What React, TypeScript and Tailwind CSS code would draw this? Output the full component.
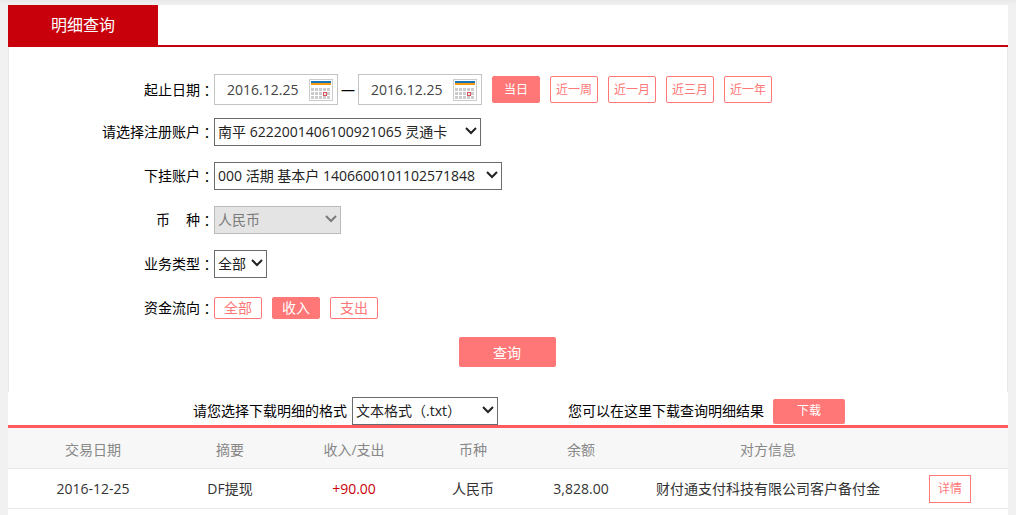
import React, { useState } from "react";

function Chevron({ muted = false }: { muted?: boolean }) {
  return (
    <svg
      aria-hidden="true"
      width="12"
      height="8"
      viewBox="0 0 12 8"
      className={`pointer-events-none absolute top-[9px] right-1 ${muted ? "text-[#7b7b7b]" : "text-[#222222]"}`}
    >
      <path d="M1 1l5 5 5-5" fill="none" stroke="currentColor" strokeWidth="2" />
    </svg>
  );
}

type PickerProps = {
  id: string;
  options: string[];
  width: string;
  disabled?: boolean;
  face?: string;
};

function Picker({ id, options, width, disabled = false, face = "" }: PickerProps) {
  return (
    <div className={`relative ${width}`}>
      <select
        id={id}
        disabled={disabled}
        className={`block h-7 w-full appearance-none border pl-[3px] text-sm ${face} ${
          disabled
            ? "border-[#bbbbbb] bg-[#e4e4e4] text-[#7b7b7b] opacity-100"
            : "border-[#6b6b6b] bg-white text-[#222222]"
        }`}
      >
        {options.map((option) => (
          <option key={option}>{option}</option>
        ))}
      </select>
      <Chevron muted={disabled} />
    </div>
  );
}

const dotRows = [9, 13, 17];
const dotColumns = [2, 6, 10, 14, 18];

function CalendarIcon() {
  return (
    <svg aria-hidden="true" width="24" height="22" viewBox="0 0 24 22" shapeRendering="crispEdges">
      <rect x="0.5" y="0.5" width="23" height="21" fill="#ffffff" stroke="#cccccc" />
      <rect x="2" y="2" width="20" height="2" fill="#1673b8" />
      <rect x="2" y="4" width="20" height="2" fill="#f29a11" />
      {dotRows.map((y) =>
        dotColumns.map((x) => <rect key={`${x}-${y}`} x={x} y={y} width="3" height="3" fill="#cccccc" />)
      )}
      <rect x="14.5" y="13.5" width="3" height="3" fill="#eeeeee" stroke="#d9535f" />
    </svg>
  );
}

function DateField({ id, label }: { id: string; label: string }) {
  return (
    <div className="flex h-[31px] w-[124px] items-center border border-[#c4c4c4] bg-white pr-1">
      <input
        id={id}
        aria-label={label}
        defaultValue="2016.12.25"
        className="min-w-0 flex-1 pl-3 text-sm text-[#444444] outline-none"
      />
      <button type="button" aria-label={`选择${label}`}>
        <CalendarIcon />
      </button>
    </div>
  );
}

function Label({ htmlFor, children }: { htmlFor?: string; children: React.ReactNode }) {
  const content = (
    <>
      {children}
      <span className="font-['Noto_Sans_CJK_TC',sans-serif]">：</span>
    </>
  );
  const style = "flex w-[205px] shrink-0 justify-end text-sm text-black";
  return htmlFor ? (
    <label htmlFor={htmlFor} className={style}>
      {content}
    </label>
  ) : (
    <span className={style}>{content}</span>
  );
}

type ChoiceProps = { options: string[]; initial: string; size: string; label: string };

function Choices({ options, initial, size, label }: ChoiceProps) {
  const [chosen, setChosen] = useState(initial);
  return (
    <div role="group" aria-label={label} className="flex gap-2.5">
      {options.map((option) => (
        <button
          key={option}
          type="button"
          aria-pressed={option === chosen}
          onClick={() => setChosen(option)}
          className={`flex w-12 items-center justify-center rounded-xs border border-[#ff7777] whitespace-nowrap ${size} ${
            option === chosen ? "bg-[#ff7777] text-white" : "bg-white text-[#ff7777]"
          }`}
        >
          {option}
        </button>
      ))}
    </div>
  );
}

const columns = [
  { title: "交易日期", width: "w-[17%]" },
  { title: "摘要", width: "w-[10.4%]" },
  { title: "收入/支出", width: "w-[14.4%]" },
  { title: "币种", width: "w-[9.4%]" },
  { title: "余额", width: "w-[12.2%]" },
  { title: "对方信息", width: "w-[25.2%]" },
];

export default function App() {
  return (
    <div className="flex min-h-screen flex-col bg-[#f1f1f1] font-['Open_Sans','Noto_Sans_CJK_SC',sans-serif] text-sm">
      <div className="h-[5px] bg-linear-to-b from-[#e9e9e9] to-[#f1f1f1]" />
      <main className="mx-2 flex-1 bg-white">
        <header className="flex border-b-2 border-[#c7000b]">
          <h1 className="flex h-10 w-[150px] items-center justify-center bg-[#c7000b] text-base text-white">
            明细查询
          </h1>
        </header>

        <form
          className="border-x border-[#e8e8e8] pt-[27px] pb-[18px]"
          onSubmit={(event) => event.preventDefault()}
        >
          <div className="mb-[5px] flex items-center">
            <Label htmlFor="start">起止日期</Label>
            <DateField id="start" label="开始日期" />
            <span className="w-5 text-center text-black">—</span>
            <DateField id="end" label="结束日期" />
            <div className="ml-2.5">
              <Choices
                label="日期范围"
                options={["当日", "近一周", "近一月", "近三月", "近一年"]}
                initial="当日"
                size="h-[27px] text-xs"
              />
            </div>
          </div>
          <div className="flex h-11 items-center">
            <Label htmlFor="account">请选择注册账户</Label>
            <Picker id="account" width="w-[267px]" options={["南平 6222001406100921065 灵通卡"]} />
          </div>
          <div className="flex h-11 items-center">
            <Label htmlFor="linked">下挂账户</Label>
            <Picker id="linked" width="w-[288px]" options={["000 活期 基本户 1406600101102571848"]} />
          </div>
          <div className="flex h-11 items-center">
            <Label htmlFor="currency">
              <span className="flex gap-4">
                <span>币</span>
                <span>种</span>
              </span>
            </Label>
            <Picker id="currency" width="w-[127px]" options={["人民币"]} disabled />
          </div>
          <div className="flex h-11 items-center">
            <Label htmlFor="business">业务类型</Label>
            <Picker id="business" width="w-[53px]" options={["全部"]} />
          </div>
          <div className="flex h-11 items-center">
            <Label>资金流向</Label>
            <Choices label="资金流向" options={["全部", "收入", "支出"]} initial="收入" size="h-[22px] text-sm" />
          </div>
          <div className="flex h-11 items-center justify-center pr-0.5">
            <button type="submit" className="h-[30px] w-[97px] rounded-xs bg-[#ff7777] pt-px text-sm text-white">
              查询
            </button>
          </div>
        </form>

        <section className="flex items-center pt-[5px] pl-[185px] text-black">
          <label htmlFor="format" className="mr-[5px]">
            请您选择下载明细的格式
          </label>
          <Picker
            id="format"
            width="w-[146px]"
            options={["文本格式（.txt）"]}
            face="font-['Open_Sans','Noto_Sans_CJK_TC',sans-serif]"
          />
          <span className="ml-[70px]">您可以在这里下载查询明细结果</span>
          <button type="button" className="ml-[9px] h-[25px] w-[72px] rounded-xs bg-[#ff7777] text-xs text-white">
            下载
          </button>
        </section>

        <div className="border-t-3 border-[#ff5a5f]">
          <table className="w-full table-fixed border-separate border-spacing-0 text-center">
            <thead>
              <tr className="h-[41px] bg-[#f7f7f7] text-[#888888] *:border-b *:border-[#e8e8e8]">
                {columns.map(({ title, width }) => (
                  <th key={title} scope="col" className={`pt-1 font-normal ${width}`}>
                    {title}
                  </th>
                ))}
                <td className="w-[11.4%]" />
              </tr>
            </thead>
            <tbody>
              <tr className="h-10 text-[#333333] *:border-b *:border-[#e8e8e8] *:pt-px">
                <td>2016-12-25</td>
                <td>DF提现</td>
                <td className="text-[#c7000b]">+90.00</td>
                <td>人民币</td>
                <td>3,828.00</td>
                <td>财付通支付科技有限公司客户备付金</td>
                <td className="pr-0.5">
                  <button
                    type="button"
                    className="mx-auto flex h-7 w-[42px] items-center justify-center border border-[#ff7777] text-xs text-[#ff7777]"
                  >
                    详情
                  </button>
                </td>
              </tr>
            </tbody>
          </table>
        </div>
      </main>
    </div>
  );
}
